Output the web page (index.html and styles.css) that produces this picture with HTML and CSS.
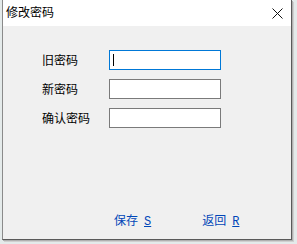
FILE: index.html
```html
<!DOCTYPE html>
<html>
<head>
<meta charset="utf-8">
<link rel="stylesheet" href="styles.css">
</head>
<body>
<div class="window">
  <div class="titlebar">
    <span class="title">修改密码</span>
    <svg class="close" width="11" height="11" viewBox="0 0 11 11"><path d="M0.5 0.5L10.5 10.5M10.5 0.5L0.5 10.5" stroke="#111" stroke-width="1" fill="none"/></svg>
  </div>
  <div class="client">
    <div class="form">
      <label class="label">旧密码</label>
      <div class="input focus"><span class="caret"></span></div>
      <label class="label">新密码</label>
      <div class="input"></div>
      <label class="label">确认密码</label>
      <div class="input"></div>
    </div>
    <div class="buttons">
      <span class="btn">保存<u class="key">S</u></span>
      <span class="btn">返回<u class="key">R</u></span>
    </div>
  </div>
</div>
</body>
</html>
```
FILE: styles.css
```css
html, body {
  margin: 0;
  padding: 0;
}
body {
  width: 297px;
  height: 244px;
  overflow: hidden;
  background: #e4eaea;
  font-family: "Noto Sans CJK SC", "Noto Sans", sans-serif;
  font-size: 12px;
  color: #000;
}
.window {
  margin-left: 2px;
  width: 288px;
  height: 239px;
  border-left: 1px solid #8a8a8a;
  border-right: 1px solid #5a5a5a;
  border-bottom: 1px solid #5a5a5a;
  box-shadow: 1px 1px 0 #b0b0b0, 2px 2px 0 #cfcfcf;
  display: flex;
  flex-direction: column;
  background: #f0f0f0;
}
.titlebar {
  height: 26px;
  background: #fff;
  display: flex;
  align-items: center;
  justify-content: space-between;
  padding: 0 8px 0 3px;
}
.title {
  font-size: 12px;
  line-height: 14px;
  margin-top: -2px;
}
.close {
  display: block;
  margin-top: 1px;
}
.client {
  flex: 1;
  background: #f0f0f0;
  padding: 24px 0 0 39px;
}
.form {
  display: grid;
  grid-template-columns: 67px 112px;
  grid-auto-rows: 20px;
  row-gap: 9px;
  align-items: center;
}
.label {
  font-size: 12px;
  line-height: 14px;
}
.input {
  box-sizing: border-box;
  height: 20px;
  border: 1px solid #7a7a7a;
  background: #fff;
  position: relative;
}
.input.focus {
  border-color: #0078d7;
}
.caret {
  position: absolute;
  left: 3px;
  top: 3px;
  width: 1px;
  height: 12px;
  background: #000;
}
.buttons {
  display: flex;
  gap: 51px;
  margin: 85px 0 0 72px;
}
.btn {
  color: #0046b8;
  font-size: 12px;
  line-height: 14px;
  white-space: pre;
}
.key {
  font-family: "Liberation Mono", monospace;
  font-size: 12px;
  margin-left: 6px;
}
```
